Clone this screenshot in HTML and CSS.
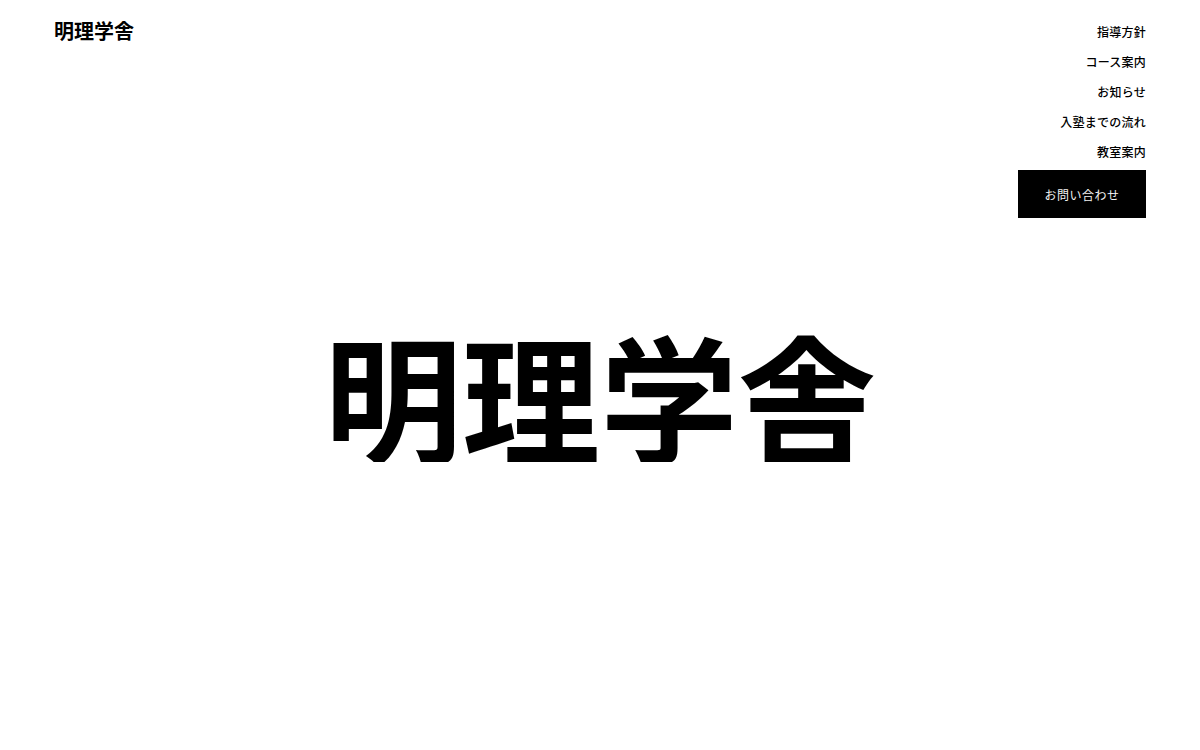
FILE: index.html
```html
<!DOCTYPE html>
<html lang="ja">
<head>
<meta charset="utf-8">
<title>明理学舎</title>
<link rel="stylesheet" href="styles.css">
</head>
<body>
<header class="site-header">
  <div class="logo">明理学舎</div>
  <nav class="nav">
    <a class="nav-item" href="#">指導方針</a>
    <a class="nav-item" href="#">コース案内</a>
    <a class="nav-item" href="#">お知らせ</a>
    <a class="nav-item" href="#">入塾までの流れ</a>
    <a class="nav-item" href="#">教室案内</a>
    <a class="nav-button" href="#">お問い合わせ</a>
  </nav>
</header>
<main class="hero">
  <h1 class="hero-title">明理学舎</h1>
</main>
</body>
</html>
```
FILE: styles.css
```css
* { box-sizing: border-box; }
html, body {
  margin: 0;
  padding: 0;
  background: #fff;
  color: #000;
  font-family: "Noto Sans CJK JP", "Noto Sans", sans-serif;
}
.site-header {
  display: flex;
  justify-content: space-between;
  align-items: flex-start;
  padding: 17px 54px 0 54px;
}
.logo {
  font-size: 20px;
  font-weight: 700;
  line-height: 28px;
}
.nav {
  display: flex;
  flex-direction: column;
  align-items: flex-end;
}
.nav-item {
  display: block;
  font-size: 12px;
  font-weight: 500;
  line-height: 30px;
  color: #000;
  text-decoration: none;
  letter-spacing: 0.02em;
}
.nav-button {
  display: flex;
  align-items: center;
  justify-content: center;
  margin-top: 3px;
  width: 128px;
  height: 48px;
  background: #000;
  color: #f2f2f2;
  font-size: 12px;
  font-weight: 400;
  text-decoration: none;
  letter-spacing: 0.04em;
}
.hero {
  display: flex;
  justify-content: center;
  padding-top: 106px;
}
.hero-title {
  margin: 0;
  font-size: 138px;
  font-weight: 700;
  line-height: 138px;
}
```
